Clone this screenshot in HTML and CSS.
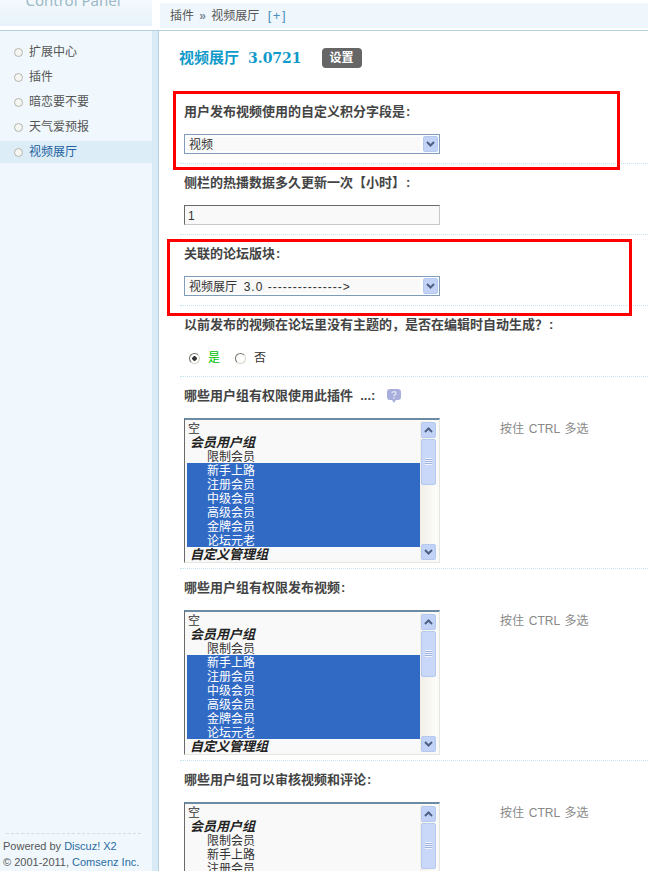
FILE: index.html
```html
<!DOCTYPE html>
<html lang="en">
<head>
    <meta charset="UTF-8">
    <title>视频展厅 - Control Panel</title>
    <link rel="stylesheet" href="styles.css">
</head>
<body>
    <div class="topbar">
        <div class="logo"><span>Control Panel</span></div>
        <div class="crumbs-wrap">
            <div class="crumbs">插件 <b>»</b> 视频展厅 <a class="plus">[+]</a></div>
        </div>
    </div>
    <div class="layout">
        <aside class="side">
            <ul class="menu">
                <li>扩展中心</li>
                <li>插件</li>
                <li>暗恋要不要</li>
                <li>天气爱预报</li>
                <li class="active">视频展厅</li>
            </ul>
            <div class="copy">
                <p>Powered by <a>Discuz!</a> <a>X2</a></p>
                <p>© 2001-2011, <a>Comsenz Inc.</a></p>
            </div>
        </aside>
        <main class="content">
            <div class="title">
                <h1>视频展厅<span class="ver">3.0721</span></h1>
                <span class="btn">设置</span>
            </div>

            <div class="row row-short">
                <label>用户发布视频使用的自定义积分字段是<em>:</em></label>
                <div class="select">
                    <span>视频</span>
                    <i class="arrow"><svg width="9" height="6" viewBox="0 0 9 6"><path d="M1 1l3.5 3.5L8 1" fill="none" stroke="#4d6185" stroke-width="2"/></svg></i>
                </div>
            </div>
            <div class="row row-short">
                <label>侧栏的热播数据多久更新一次【小时】<em>:</em></label>
                <div class="input">1</div>
            </div>
            <div class="row row-short">
                <label>关联的论坛版块<em>:</em></label>
                <div class="select">
                    <span>视频展厅&nbsp; <u>3.0 ---------------&gt;</u></span>
                    <i class="arrow"><svg width="9" height="6" viewBox="0 0 9 6"><path d="M1 1l3.5 3.5L8 1" fill="none" stroke="#4d6185" stroke-width="2"/></svg></i>
                </div>
            </div>
            <div class="row row-short">
                <label>以前发布的视频在论坛里没有主题的&#xFF0C;是否在编辑时自动生成&#xFF1F;<em>:</em></label>
                <div class="radios">
                    <span class="radio on"></span><span class="yes">是</span>
                    <span class="radio"></span><span>否</span>
                </div>
            </div>

            <div class="row row-list">
                <label>哪些用户组有权限使用此插件&nbsp; ...: <svg class="help" width="14" height="14" viewBox="0 0 14 14"><path d="M3 0h8a3 3 0 0 1 3 3v5a3 3 0 0 1-3 3H9l-2 3-2-3H3a3 3 0 0 1-3-3V3a3 3 0 0 1 3-3z" fill="#a9afdc"/><path d="M5 4.2C5 2 9 2 9 4.2 9 5.6 7 5.6 7 7M7 8v1.400" fill="none" stroke="#e4e6f5" stroke-width="1.300"/></svg></label>
                <div class="list-line">
                    <div class="list">
                        <ul>
                            <li>空</li>
                            <li class="grp">会员用户组</li>
                            <li class="sub">限制会员</li>
                            <li class="sub sel">新手上路</li>
                            <li class="sub sel">注册会员</li>
                            <li class="sub sel">中级会员</li>
                            <li class="sub sel">高级会员</li>
                            <li class="sub sel">金牌会员</li>
                            <li class="sub sel">论坛元老</li>
                            <li class="grp">自定义管理组</li>
                        </ul>
                        <div class="bar">
                            <i class="bar-btn"><svg width="9" height="6" viewBox="0 0 9 6"><path d="M1 5l3.5-3.5L8 5" fill="none" stroke="#4d6185" stroke-width="2"/></svg></i>
                            <i class="thumb"></i>
                            <i class="bar-btn down"><svg width="9" height="6" viewBox="0 0 9 6"><path d="M1 1l3.5 3.5L8 1" fill="none" stroke="#4d6185" stroke-width="2"/></svg></i>
                        </div>
                    </div>
                    <span class="tip">按住 CTRL 多选</span>
                </div>
            </div>
            <div class="row row-list">
                <label>哪些用户组有权限发布视频<em>:</em></label>
                <div class="list-line">
                    <div class="list">
                        <ul>
                            <li>空</li>
                            <li class="grp">会员用户组</li>
                            <li class="sub">限制会员</li>
                            <li class="sub sel">新手上路</li>
                            <li class="sub sel">注册会员</li>
                            <li class="sub sel">中级会员</li>
                            <li class="sub sel">高级会员</li>
                            <li class="sub sel">金牌会员</li>
                            <li class="sub sel">论坛元老</li>
                            <li class="grp">自定义管理组</li>
                        </ul>
                        <div class="bar">
                            <i class="bar-btn"><svg width="9" height="6" viewBox="0 0 9 6"><path d="M1 5l3.5-3.5L8 5" fill="none" stroke="#4d6185" stroke-width="2"/></svg></i>
                            <i class="thumb"></i>
                            <i class="bar-btn down"><svg width="9" height="6" viewBox="0 0 9 6"><path d="M1 1l3.5 3.5L8 1" fill="none" stroke="#4d6185" stroke-width="2"/></svg></i>
                        </div>
                    </div>
                    <span class="tip">按住 CTRL 多选</span>
                </div>
            </div>
            <div class="row row-list">
                <label>哪些用户组可以审核视频和评论<em>:</em></label>
                <div class="list-line">
                    <div class="list">
                        <ul>
                            <li>空</li>
                            <li class="grp">会员用户组</li>
                            <li class="sub">限制会员</li>
                            <li class="sub">新手上路</li>
                            <li class="sub">注册会员</li>
                            <li class="sub">中级会员</li>
                            <li class="sub">高级会员</li>
                            <li class="sub">金牌会员</li>
                            <li class="sub">论坛元老</li>
                            <li class="grp">自定义管理组</li>
                        </ul>
                        <div class="bar">
                            <i class="bar-btn"><svg width="9" height="6" viewBox="0 0 9 6"><path d="M1 5l3.5-3.5L8 5" fill="none" stroke="#4d6185" stroke-width="2"/></svg></i>
                            <i class="thumb"></i>
                            <i class="bar-btn down"><svg width="9" height="6" viewBox="0 0 9 6"><path d="M1 1l3.5 3.5L8 1" fill="none" stroke="#4d6185" stroke-width="2"/></svg></i>
                        </div>
                    </div>
                    <span class="tip">按住 CTRL 多选</span>
                </div>
            </div>

            <div class="mark mark-one"></div>
            <div class="mark mark-two"></div>
        </main>
    </div>
</body>
</html>
```

FILE: styles.css
```css
* {
    box-sizing: border-box;
}

html, body {
    height: 100%;
}

body {
    margin: 0;
    overflow: hidden;
    display: flex;
    flex-direction: column;
    background: #fff;
    color: #444;
    font: 12px/14px "Liberation Sans", "Noto Sans CJK SC", sans-serif;
}

ul {
    margin: 0;
    padding: 0;
    list-style: none;
}

a {
    color: #2b6ca3;
}

.topbar {
    flex: none;
    display: flex;
    height: 31px;
    border-bottom: 1px solid #b5d0de;
}

.logo {
    width: 152px;
    height: 26px;
    overflow: hidden;
    padding-right: 6px;
    background: linear-gradient(#f4f9fd, #e6f2fa);
    text-align: center;
    margin-right: 8px;
}

.logo span {
    display: block;
    margin-top: -9px;
    font-family: "Noto Sans", sans-serif;
    font-size: 15px;
    line-height: 18px;
    color: #9cb9c7;
}

.crumbs-wrap {
    flex: 1;
    padding-top: 3px;
}

.crumbs {
    height: 25px;
    padding-left: 10px;
    background: #f0f7fc;
    line-height: 25px;
    color: #555;
}

.crumbs b {
    font-weight: bold;
    color: #7a8a99;
    margin: 0 2px;
}

.plus {
    margin-left: 5px;
    font-size: 13px;
    letter-spacing: 1.500px;
    color: #4a8fc0;
}

.layout {
    flex: 1;
    display: flex;
    min-height: 0;
}

.side {
    flex: none;
    width: 159px;
    display: flex;
    flex-direction: column;
    background: #f0f8fd;
    border-right: 1px solid #b5d0de;
    box-shadow: inset -6px 0 0 #d9ebf6;
}

.menu {
    width: 152px;
    padding-top: 10px;
}

.menu li {
    position: relative;
    height: 25px;
    padding-left: 29px;
    line-height: 22px;
    color: #555;
}

.menu li::before {
    content: "";
    position: absolute;
    left: 14px;
    top: 7px;
    width: 7px;
    height: 7px;
    border: 1px solid #b5b5b0;
    border-radius: 50%;
    background: #f5f5f2;
}

.menu .active {
    height: 22px;
    background: #dcedf8;
    color: #22619e;
}

.copy {
    margin-top: auto;
    padding: 5px 0 1px 3px;
    font-size: 11px;
    color: #555;
    line-height: 16px;
    white-space: nowrap;
}

.copy::before {
    content: "";
    display: block;
    width: 135px;
    margin: -5px 0 4px 3px;
    border-top: 1px dashed #d5dde2;
}

.copy p {
    margin: 0;
}

.content {
    position: relative;
    flex: 1;
    min-width: 0;
    padding-left: 21px;
}

.title {
    display: flex;
    align-items: center;
    height: 62px;
    margin-left: -1px;
    padding-bottom: 8px;
}

.title h1 {
    margin: 0 20px 0 0;
    font-size: 15px;
    font-weight: bold;
    color: #0f9ac9;
}

.ver {
    margin-left: 9px;
    font-family: "DejaVu Serif", serif;
    font-size: 14px;
}

.btn {
    width: 40px;
    height: 20px;
    line-height: 20px;
    border-radius: 4px;
    background: #666;
    color: #fff;
    font-weight: bold;
    text-align: center;
}

.row {
    padding: 10px 0 0 4px;
    border-bottom: 1px dotted #c7e2ef;
}

.row-short {
    height: 71px;
}

.row-list {
    height: 192px;
}

.row label {
    display: flex;
    align-items: center;
    height: 18px;
    font-size: 13px;
    line-height: 18px;
    font-weight: bold;
    color: #444;
    white-space: pre;
}

.row label em {
    margin-left: 1px;
    font-style: normal;
}

.select {
    display: flex;
    align-items: center;
    justify-content: space-between;
    width: 256px;
    height: 20px;
    margin-top: 13px;
    padding: 1px;
    border: 1px solid #7f9db9;
    background: #fff;
    color: #333;
}

.select span {
    flex: 1;
    height: 14px;
    padding-left: 3px;
    background: #f9f9f9;
    line-height: 16px;
    margin-right: 3px;
    white-space: nowrap;
}

.select u {
    text-decoration: none;
    letter-spacing: 1px;
}

.arrow, .bar-btn {
    display: flex;
    align-items: center;
    justify-content: center;
    width: 15px;
    height: 16px;
    border-radius: 2px;
    background: #c3d3f7;
    border: 1px solid #b4c8f0;
}

.input {
    width: 256px;
    height: 20px;
    margin-top: 13px;
    padding-left: 3px;
    border: 1px solid;
    border-color: #6a6a6a #c8c8c8 #c8c8c8 #6a6a6a;
    background: #f9f9f9;
    line-height: 20px;
    color: #333;
}

.radios {
    display: flex;
    align-items: center;
    height: 20px;
    margin-top: 14px;
    padding-left: 5px;
    color: #333;
}

.radio {
    width: 11px;
    height: 11px;
    margin-right: 8px;
    border: 1px solid #77736a;
    border-right-color: #d9d5c9;
    border-bottom-color: #d9d5c9;
    border-radius: 50%;
    background: #fff;
}

.radio.on {
    background: radial-gradient(circle, #333 0 2px, #fff 2.500px);
}

.yes {
    color: #00c000;
    margin-right: 15px;
}

.help {
    margin-left: 8px;
}

.list-line {
    display: flex;
    align-items: flex-start;
    margin-top: 13px;
}

.list {
    display: flex;
    width: 256px;
    height: 145px;
    padding: 1px 2px 2px 2px;
    border: 1px solid;
    border-color: #6a6a6a #e6e6de #e6e6de #6a6a6a;
    border-top: 2px solid #6d8aa3;
    background: #f9f9f9;
    color: #333;
}

.list ul {
    flex: 1;
    min-width: 0;
}

.list li {
    height: 14px;
    line-height: 16px;
    padding-left: 1px;
    white-space: nowrap;
}

.list .grp {
    font-size: 13px;
    line-height: 15px;
    font-weight: bold;
    font-style: italic;
    padding-left: 3px;
    color: #222;
}

.list .sub {
    padding-left: 20px;
}

.list .sel {
    background: #316ac5;
    color: #fff;
}

.bar {
    flex: none;
    display: flex;
    flex-direction: column;
    width: 17px;
    padding: 1px 0 0 1px;
    background: linear-gradient(to right, #f1efe6, #fdfdfa);
}

.bar-btn {
    flex: none;
}

.thumb {
    flex: none;
    position: relative;
    height: 46px;
    margin: 1px 1px 0 0;
    border: 1px solid #b4c8f0;
    border-radius: 2px;
    background: #c9d7f9;
}

.thumb::after {
    content: "";
    position: absolute;
    left: 3px;
    top: 18px;
    width: 7px;
    height: 7px;
    background: repeating-linear-gradient(#eef3fe 0 1px, #9fb3e3 1px 2px);
}

.bar-btn.down {
    margin-top: auto;
}

.tip {
    margin: 4px 0 0 60px;
    word-spacing: 1.500px;
    color: #888;
}

.mark {
    position: absolute;
    border: 3px solid #f00;
    pointer-events: none;
}

.mark-one {
    left: 14px;
    top: 60px;
    width: 447px;
    height: 79px;
}

.mark-two {
    left: 8px;
    top: 208px;
    width: 465px;
    height: 77px;
}
```
